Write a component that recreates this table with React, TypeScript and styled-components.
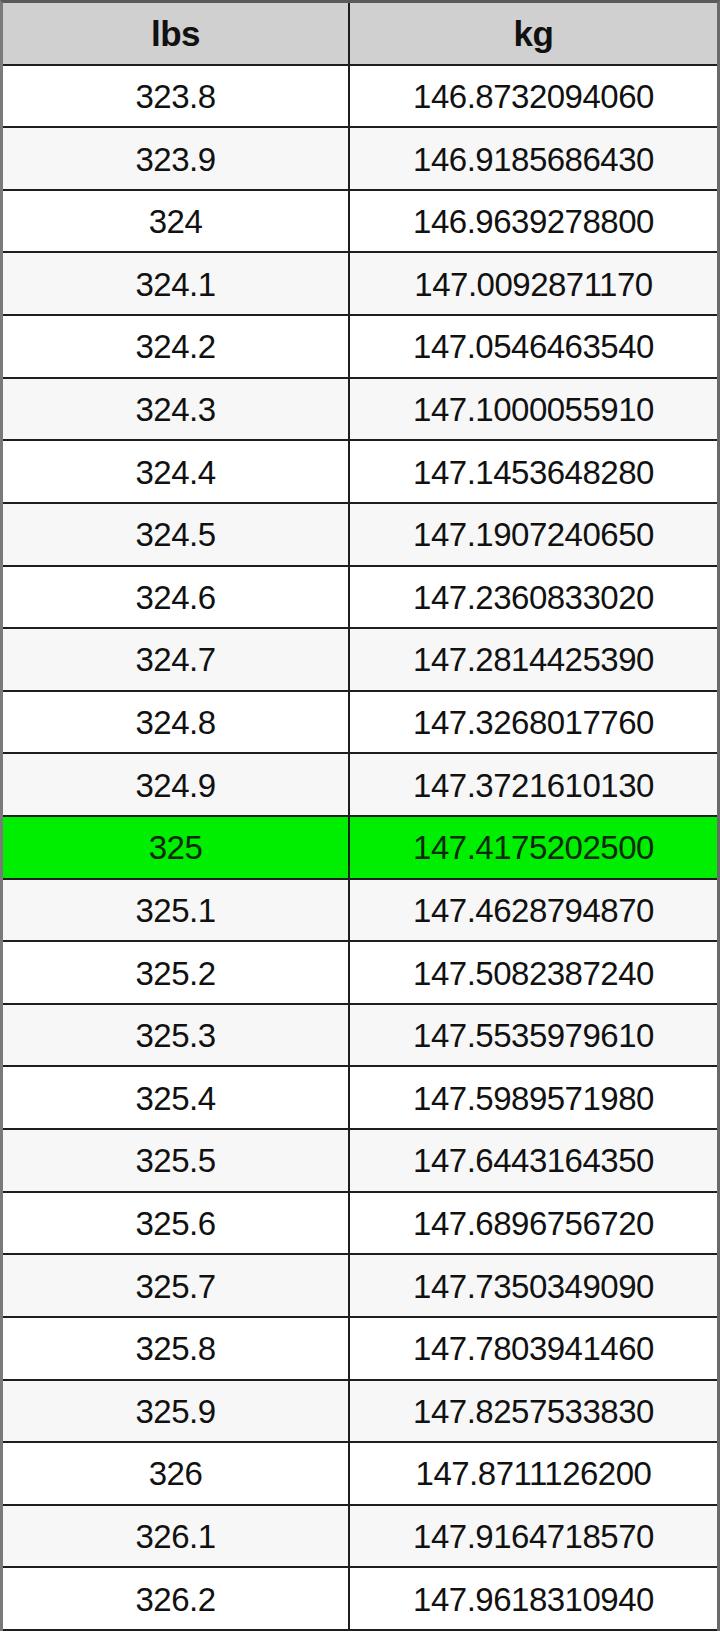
import React from "react";
import styled, { createGlobalStyle } from "styled-components";

const Global = createGlobalStyle`
  html, body { margin: 0; padding: 0; background: #ffffff; }
  body { font-family: "Liberation Sans", Arial, sans-serif; }
`;

const Table = styled.div`
  box-sizing: border-box;
  width: 720px;
  height: 1631px;
  display: grid;
  grid-template-columns: 345px 2px 367px;
  grid-template-rows: repeat(26, 1fr);
  border-top: 3px solid #5a5a5a;
  border-left: 3px solid #7a7a7a;
  border-right: 3px solid #6a6a6a;
  background: #1e1e1e;
`;

type Kind = "head" | "odd" | "even" | "hl";

const bg: Record<Kind, string> = {
  head: "#d0d0d0",
  odd: "#ffffff",
  even: "#f7f7f7",
  hl: "#00ee00",
};

const Cell = styled.div<{ $kind: Kind }>`
  box-sizing: border-box;
  display: flex;
  align-items: center;
  justify-content: center;
  padding-top: 1px;
  background: ${(p) => bg[p.$kind]};
  border-bottom: 2px solid #1e1e1e;
  color: ${(p) => (p.$kind === "hl" ? "#0b2a0b" : "#111111")};
  font-size: ${(p) => (p.$kind === "head" ? "35px" : "33px")};
  font-weight: ${(p) => (p.$kind === "head" ? 700 : 400)};
  letter-spacing: -0.5px;
  line-height: 1;
`;

const Divider = styled.div`
  background: #1e1e1e;
`;

const rows: [string, string][] = [
  ["323.8", "146.8732094060"],
  ["323.9", "146.9185686430"],
  ["324", "146.9639278800"],
  ["324.1", "147.0092871170"],
  ["324.2", "147.0546463540"],
  ["324.3", "147.1000055910"],
  ["324.4", "147.1453648280"],
  ["324.5", "147.1907240650"],
  ["324.6", "147.2360833020"],
  ["324.7", "147.2814425390"],
  ["324.8", "147.3268017760"],
  ["324.9", "147.3721610130"],
  ["325", "147.4175202500"],
  ["325.1", "147.4628794870"],
  ["325.2", "147.5082387240"],
  ["325.3", "147.5535979610"],
  ["325.4", "147.5989571980"],
  ["325.5", "147.6443164350"],
  ["325.6", "147.6896756720"],
  ["325.7", "147.7350349090"],
  ["325.8", "147.7803941460"],
  ["325.9", "147.8257533830"],
  ["326", "147.8711126200"],
  ["326.1", "147.9164718570"],
  ["326.2", "147.9618310940"],
];

export default function App() {
  return (
    <>
      <Global />
      <Table>
        <Cell $kind="head">lbs</Cell>
        <Divider />
        <Cell $kind="head">kg</Cell>
        {rows.map(([a, b], i) => {
          const kind: Kind = a === "325" ? "hl" : i % 2 === 0 ? "odd" : "even";
          return (
            <React.Fragment key={a}>
              <Cell $kind={kind}>{a}</Cell>
              <Divider />
              <Cell $kind={kind}>{b}</Cell>
            </React.Fragment>
          );
        })}
      </Table>
    </>
  );
}
